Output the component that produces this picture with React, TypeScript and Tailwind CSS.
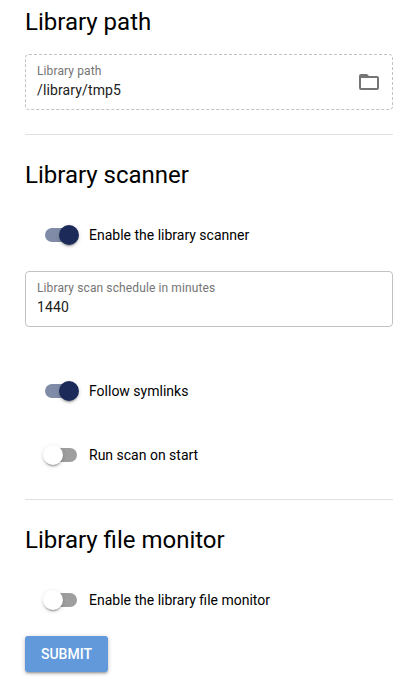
import React from "react";

function Heading({ children }: { children: React.ReactNode }) {
  return <h2 className="h-8 text-[24px] leading-8 whitespace-nowrap">{children}</h2>;
}

function Toggle({ label, on = false }: { label: string; on?: boolean }) {
  return (
    <div className="flex h-10 items-center pl-5">
      <div className={`flex h-[14px] w-8 items-center rounded-full ${on ? "justify-end bg-[#808ca7]" : "justify-start bg-[#9e9e9e]"}`}>
        <div className={`size-5 shrink-0 rounded-full shadow-[0_3px_1px_-2px_rgba(0,0,0,0.2),0_2px_2px_0_rgba(0,0,0,0.14),0_1px_5px_0_rgba(0,0,0,0.12)] ${on ? "-mr-0.5 bg-[#1b2a59]" : "-ml-0.5 bg-white"}`} />
      </div>
      <span className="ml-3 text-[14px] leading-5 whitespace-nowrap">{label}</span>
    </div>
  );
}

function Field({ label, value, dashed = false }: { label: string; value: string; dashed?: boolean }) {
  return (
    <div className={`flex h-14 items-center justify-between rounded-[4px] border border-[#c2c2c2] pr-[11px] pl-[11px] ${dashed ? "border-dashed" : ""}`}>
      <div className="pb-px">
        <div className="h-4 text-[12px] leading-4 tracking-[0.00937em] text-[#757575]">{label}</div>
        <div className="mt-px h-5 text-[14px] leading-5 tracking-[0.00937em] text-[#212121]">{value}</div>
      </div>
      {dashed && (
        <svg className="size-6" viewBox="0 0 24 24" fill="#757575">
          <path d="M20 6h-8l-2-2H4a2 2 0 0 0-2 2v12a2 2 0 0 0 2 2h16a2 2 0 0 0 2-2V8a2 2 0 0 0-2-2m0 12H4V8h16z" />
        </svg>
      )}
    </div>
  );
}

export default function App() {
  return (
    <main className="h-[695px] overflow-hidden bg-white pr-[26px] pl-[25px] pt-1.5 font-['Roboto',sans-serif] text-black">
      <Heading>Library path</Heading>
      <div className="mt-4"><Field dashed label="Library path" value="/library/tmp5" /></div>
      <hr className="mt-6 border-[#e0e0e0]" />
      <div className="mt-6"><Heading>Library scanner</Heading></div>
      <div className="mt-6"><Toggle on label="Enable the library scanner" /></div>
      <div className="mt-4"><Field label="Library scan schedule in minutes" value="1440" /></div>
      <div className="mt-11"><Toggle on label="Follow symlinks" /></div>
      <div className="mt-6"><Toggle label="Run scan on start" /></div>
      <hr className="mt-6 border-[#e0e0e0]" />
      <div className="mt-6"><Heading>Library file monitor</Heading></div>
      <div className="mt-6"><Toggle label="Enable the library file monitor" /></div>
      <button className="mt-4 h-9 w-[83px] rounded-[3px] bg-[#6299db] text-[14px] font-medium leading-5 text-white shadow-[0_1px_5px_rgba(0,0,0,0.2),0_2px_2px_rgba(0,0,0,0.14),0_3px_1px_-2px_rgba(0,0,0,0.12)]">SUBMIT</button>
    </main>
  );
}
